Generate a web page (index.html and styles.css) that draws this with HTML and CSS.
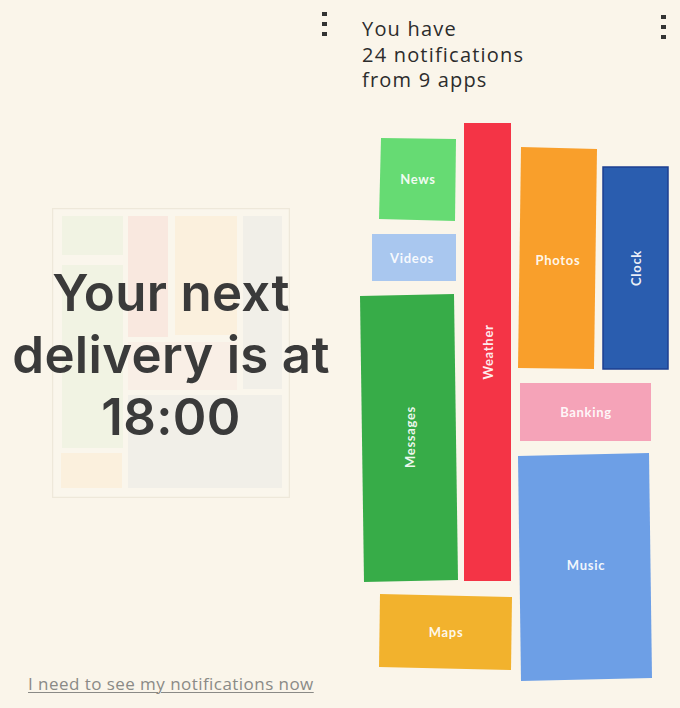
FILE: index.html
```html
<!DOCTYPE html>
<html>
  <head>
    <link rel="stylesheet" href="styles.css">
  </head>
  <body>
    <div class="screen">
      <section class="panel panel-left">
        <div class="panel-top">
          <span class="kebab"><i></i><i></i><i></i></span>
        </div>
        <div class="delivery">
          <div class="delivery-box">
            <svg class="ghost" viewBox="52 208 238 290" width="238" height="290">
              <rect class="ghost-frame" x="52.5" y="208.5" width="237" height="289" />
              <rect class="g-green" x="62" y="216" width="61" height="39" />
              <rect class="g-green" x="62" y="265" width="61" height="183" />
              <rect class="g-pink" x="128" y="216" width="40" height="121" />
              <rect class="g-yellow" x="175" y="216" width="62" height="119" />
              <rect class="g-grey" x="243" y="216" width="39" height="173" />
              <rect class="g-rose" x="128" y="342" width="109" height="48" />
              <rect class="g-yellow" x="61" y="453" width="61" height="35" />
              <rect class="g-grey" x="128" y="395" width="154" height="93" />
            </svg>
            <h1 class="delivery-text">Your next<br>delivery is at<br>18:00</h1>
          </div>
        </div>
        <a class="see-link" href="#">I need to see my notifications now</a>
      </section>

      <section class="panel panel-right">
        <header class="summary">
          <p class="summary-text">You have<br>24 notifications<br>from 9 apps</p>
          <span class="kebab kebab-right"><i></i><i></i><i></i></span>
        </header>
        <svg class="collage" viewBox="340 110 340 590" width="340" height="590">
          <polygon class="t-news" points="381,138 456,139 455,221 379,219" />
          <polygon class="t-videos" points="372,234 456,234 456,281 372,281" />
          <polygon class="t-messages" points="360,296 454,294 458,580 364,582" />
          <polygon class="t-weather" points="464,123 511,123 511,581 464,581" />
          <polygon class="t-photos" points="521,147 597,149 594,369 518,368" />
          <polygon class="t-clock" points="603,167 668,167 668,369 603,369" />
          <polygon class="t-banking" points="520,383 651,383 651,441 520,441" />
          <polygon class="t-music" points="518,456 649,453 652,678 521,681" />
          <polygon class="t-maps" points="380,594 512,597 511,670 379,667" />

          <text class="tile-label" x="418" y="179">News</text>
          <text class="tile-label" x="412" y="258">Videos</text>
          <text class="tile-label" x="410" y="437" transform="rotate(-90 410 437)">Messages</text>
          <text class="tile-label" x="488" y="352" transform="rotate(-90 488 352)">Weather</text>
          <text class="tile-label" x="558" y="260">Photos</text>
          <text class="tile-label" x="636" y="268" transform="rotate(-90 636 268)">Clock</text>
          <text class="tile-label" x="586" y="412">Banking</text>
          <text class="tile-label" x="586" y="565">Music</text>
          <text class="tile-label" x="446" y="632">Maps</text>
        </svg>
      </section>
    </div>
  </body>
</html>
```

FILE: styles.css
```css
html,
body {
  margin: 0;
  padding: 0;
  background-color: #faf5ea;
}
body {
  font-family: "Open Sans", Lato, sans-serif;
  color: #2f2f2f;
}
.screen {
  display: flex;
  width: 680px;
  height: 708px;
  overflow: hidden;
}
.panel {
  width: 340px;
  height: 708px;
  display: flex;
  flex-direction: column;
}

/* 3-dot menu */
.kebab {
  display: flex;
  flex-direction: column;
  gap: 6px;
}
.kebab i {
  display: block;
  width: 5px;
  height: 4px;
  background-color: #333;
}

/* left side */
.panel-top {
  height: 40px;
  box-sizing: border-box;
  padding: 12px 13px 0 0;
  display: flex;
  justify-content: flex-end;
}
.delivery {
  flex: 1;
  display: flex;
  justify-content: center;
  align-items: center;
  padding-bottom: 8px;
}
.delivery-box {
  position: relative;
  width: 238px;
  height: 290px;
  margin-left: 2px;
}
.ghost {
  display: block;
}
.ghost-frame {
  fill: #faf6ec;
  stroke: #eee8da;
  stroke-width: 1.5;
}
.g-green {
  fill: #f1f3e3;
}
.g-pink {
  fill: #f9e8df;
}
.g-rose {
  fill: #f9efe6;
}
.g-yellow {
  fill: #fbf0dd;
}
.g-grey {
  fill: #f1efe8;
}
.delivery-text {
  position: absolute;
  left: 50%;
  top: 50%;
  transform: translate(-50%, calc(-50% + 2px));
  margin: 0;
  width: 340px;
  text-align: center;
  font-family: Inter, Lato, sans-serif;
  font-size: 51px;
  font-weight: 600;
  line-height: 62px;
  letter-spacing: 0.3px;
  color: #3a3a3a;
}
.see-link {
  display: block;
  padding: 0 0 13px 28px;
  font-size: 17px;
  line-height: 22px;
  letter-spacing: 0.45px;
  color: #8a8a86;
  text-decoration: underline;
  text-underline-offset: 2px;
  text-decoration-thickness: 1px;
}

/* right side */
.summary {
  display: flex;
  justify-content: space-between;
  padding: 16px 14px 0 22px;
  height: 96px;
  box-sizing: border-box;
}
.summary-text {
  margin: 0;
  font-size: 20px;
  line-height: 25.5px;
  font-weight: 400;
  letter-spacing: 1.2px;
  color: #2c2c2c;
}
.kebab-right {
  margin-top: -1px;
}
.collage {
  display: block;
  margin-top: 14px;
}
.collage polygon {
  stroke-width: 0;
}
.t-news {
  fill: #66db73;
}
.t-videos {
  fill: #a9c7ef;
}
.t-messages {
  fill: #37ac48;
}
.t-weather {
  fill: #f43446;
}
.t-photos {
  fill: #f99f2b;
}
.t-clock {
  fill: #2a5daf;
  stroke: #1d3f91 !important;
  stroke-width: 1.5 !important;
}
.t-banking {
  fill: #f5a3b8;
}
.t-music {
  fill: #6d9fe6;
}
.t-maps {
  fill: #f2b22d;
}
.tile-label {
  fill: #fff;
  fill-opacity: 0.92;
  font-family: Lato, sans-serif;
  font-size: 13px;
  font-weight: 700;
  letter-spacing: 0.7px;
  text-anchor: middle;
  dominant-baseline: central;
}
```
